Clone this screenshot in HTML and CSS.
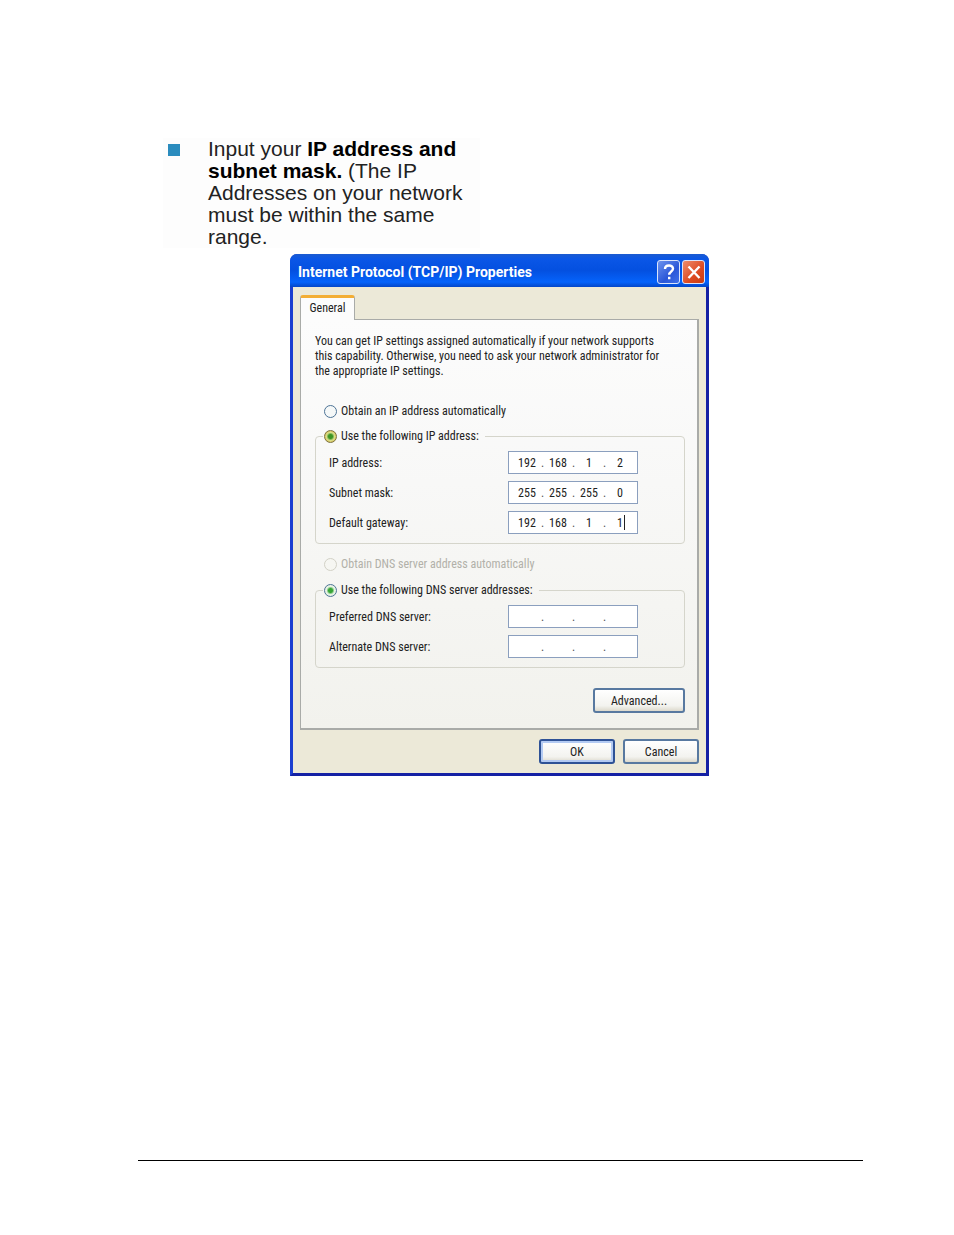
FILE: index.html
```html
<!DOCTYPE html>
<html lang="en">
<head>
    <meta charset="UTF-8">
    <meta name="viewport" content="width=device-width, initial-scale=1.0">
    <title>Internet Protocol (TCP/IP) Properties</title>
    <link rel="stylesheet" href="styles.css">
</head>
<body>
    <main class="page">
        <ul class="steps">
            <li class="step">Input your <strong>IP address and subnet mask.</strong> (The IP Addresses on your network must be within the same range.</li>
        </ul>

        <section class="dialog">
            <header class="title-bar">
                <h1 class="title">Internet Protocol (TCP/IP) Properties</h1>
                <button class="title-button help" type="button" aria-label="Help">
                    <svg viewBox="0 0 20 20" width="20" height="20"><path d="M6 7C6 2.3 14 2.3 14 6.8C14 9.5 10.2 9.5 10.2 12.8M10.2 14.8V17.2" /></svg>
                </button>
                <button class="title-button close" type="button" aria-label="Close">
                    <svg viewBox="0 0 20 20" width="20" height="20"><path d="M4.5 4.5L15.5 16M15.5 4.5L4.5 16" /></svg>
                </button>
            </header>

            <form class="dialog-body">
                <button class="tab" type="button">General</button>

                <div class="panel">
                    <p class="intro">You can get IP settings assigned automatically if your network supports this capability. Otherwise, you need to ask your network administrator for the appropriate IP settings.</p>

                    <label class="option first"><input type="radio" name="ip">Obtain an IP address automatically</label>
                    <fieldset class="group">
                        <legend><label class="option"><input class="hot" type="radio" name="ip" checked>Use the following IP address:</label></legend>
                        <div class="row">
                            <label for="ip-1">IP address:</label>
                            <div class="address">
                                <input id="ip-1" value="192"><span>.</span><input aria-label="IP address, part 2" value="168"><span>.</span><input aria-label="IP address, part 3" value="1"><span>.</span><input aria-label="IP address, part 4" value="2">
                            </div>
                        </div>
                        <div class="row">
                            <label for="mask-1">Subnet mask:</label>
                            <div class="address">
                                <input id="mask-1" value="255"><span>.</span><input aria-label="Subnet mask, part 2" value="255"><span>.</span><input aria-label="Subnet mask, part 3" value="255"><span>.</span><input aria-label="Subnet mask, part 4" value="0">
                            </div>
                        </div>
                        <div class="row">
                            <label for="gateway-1">Default gateway:</label>
                            <div class="address active">
                                <input id="gateway-1" value="192"><span>.</span><input aria-label="Default gateway, part 2" value="168"><span>.</span><input aria-label="Default gateway, part 3" value="1"><span>.</span><input aria-label="Default gateway, part 4" value="1">
                            </div>
                        </div>
                    </fieldset>

                    <label class="option second"><input type="radio" name="dns" disabled>Obtain DNS server address automatically</label>
                    <fieldset class="group">
                        <legend><label class="option"><input type="radio" name="dns" checked>Use the following DNS server addresses:</label></legend>
                        <div class="row">
                            <label for="dns-1">Preferred DNS server:</label>
                            <div class="address">
                                <input id="dns-1"><span>.</span><input aria-label="Preferred DNS server, part 2"><span>.</span><input aria-label="Preferred DNS server, part 3"><span>.</span><input aria-label="Preferred DNS server, part 4">
                            </div>
                        </div>
                        <div class="row">
                            <label for="alt-1">Alternate DNS server:</label>
                            <div class="address">
                                <input id="alt-1"><span>.</span><input aria-label="Alternate DNS server, part 2"><span>.</span><input aria-label="Alternate DNS server, part 3"><span>.</span><input aria-label="Alternate DNS server, part 4">
                            </div>
                        </div>
                    </fieldset>

                    <div class="panel-actions">
                        <button class="button advanced" type="button">Advanced...</button>
                    </div>
                </div>

                <div class="dialog-actions">
                    <button class="button default" type="button">OK</button>
                    <button class="button" type="button">Cancel</button>
                </div>
            </form>
        </section>

        <hr class="footer-rule">
    </main>
</body>
</html>
```
FILE: styles.css
```css
* {
    box-sizing: border-box;
    margin: 0;
    padding: 0;
}

body {
    background: #fff;
    color: #222;
    font-family: "Liberation Sans", Arial, sans-serif;
}

.page {
    display: flex;
    flex-direction: column;
    min-height: 100vh;
    padding: 138px 91px 74px 138px;
}

/* Instruction */
.steps {
    list-style: none;
    width: 100%;
    max-width: 342px;
    padding-left: 25px;
}

.step {
    padding: 0 10px 0 45px;
    font-size: 21px;
    line-height: 22px;
    background: linear-gradient(#2b8cbe, #2b8cbe) 5px 6px / 12px 12px no-repeat #fdfdfd;
}

.step strong {
    color: #000;
}

/* Dialog window */
.dialog {
    width: 100%;
    max-width: 419px;
    margin: 6px 0 24px 152px;
    border: 3px solid #1c3fd0;
    border-right-color: #1420a4;
    border-bottom-color: #1420a4;
    border-radius: 7px 7px 0 0;
    background: #ece9d8;
    font-family: "Roboto Condensed", "Roboto", sans-serif;
    font-size: 12px;
}

.title-bar {
    display: flex;
    align-items: center;
    gap: 2px;
    height: 33px;
    margin: -3px -3px 0;
    padding: 2px 4px 0 8px;
    border-radius: 7px 7px 0 0;
    background: linear-gradient(#1b5bd0, #0a56e6 15%, #0450e0 50%, #0563fb 85%, #0446c8);
}

.title {
    flex: 1;
    color: #fff;
    font-family: "Roboto", sans-serif;
    font-size: 14px;
    font-weight: 700;
}

.title-button {
    display: flex;
    align-items: center;
    justify-content: center;
    width: 23px;
    height: 24px;
    border: 1px solid #dbe5fb;
    border-radius: 3px;
}

.title-button svg {
    fill: none;
    stroke: #fff;
    stroke-width: 2.4;
}

.help {
    background: linear-gradient(135deg, #6d93ee, #2a57d8 60%, #3f70ea);
}

.close {
    background: linear-gradient(135deg, #ee8c6c, #dd4a21 60%, #c83c14);
}

.dialog-body {
    padding: 8px 7px 9px;
}

.tab {
    display: block;
    width: 55px;
    height: 25px;
    margin-bottom: -1px;
    padding-bottom: 3px;
    position: relative;
    border: 1px solid #a9aba8;
    border-top: 3px solid #f3ae35;
    border-bottom: 0;
    border-radius: 3px 3px 0 0;
    background: #fcfcfc;
    color: #222;
    font: inherit;
}

.panel {
    padding: 14px 12px 15px 14px;
    border: 1px solid #a9aba8;
    border-right-width: 2px;
    border-bottom-width: 2px;
    background: linear-gradient(#fcfcfc, #f8f8f7 40%, #f2f2ed);
}

.intro {
    padding-right: 16px;
    line-height: 15px;
}

.option {
    display: flex;
    align-items: center;
    gap: 4px;
    height: 16px;
}

.option input {
    appearance: none;
    width: 13px;
    height: 13px;
    border: 1px solid #4d7396;
    border-radius: 50%;
    background: #f5f8f8;
}

.option input:checked {
    background: radial-gradient(circle, #35a535 0 2px, #e6f2e3 4px);
}

.option input.hot:checked {
    border-color: #7a7440;
    background: radial-gradient(circle, #3d9424 0 2px, #d5e08c 4px, #e5bb50 6px);
}

.option input:disabled {
    border-color: #d2d1c6;
    background: #f6f6f2;
}

.first {
    margin: 24px 0 9px 9px;
}

.second {
    margin: 12px 0 10px 9px;
}

.option:has(:disabled) {
    color: #b2b1a9;
}

.group {
    padding: 0 7px 9px;
    border: 1px solid #d5d5cb;
    border-radius: 4px;
}

.group legend {
    padding: 0 6px 0 1px;
}

.row {
    display: flex;
    align-items: center;
    justify-content: space-between;
    margin-top: 7px;
    padding: 0 39px 0 6px;
}

.address {
    display: flex;
    align-items: center;
    position: relative;
    width: 130px;
    height: 23px;
    padding: 0 1px 0 4px;
    border: 1px solid #8b9fbe;
    background: #fff;
}

.address input {
    width: 28px;
    border: 0;
    outline: 0;
    background: none;
    color: #222;
    font: inherit;
    text-align: center;
}

.address span {
    width: 3px;
    color: #555;
}

/* Text cursor in the field being edited */
.active::after {
    content: "";
    position: absolute;
    top: 3px;
    right: 12px;
    width: 1px;
    height: 15px;
    background: #222;
}

.panel-actions,
.dialog-actions {
    display: flex;
    justify-content: flex-end;
    gap: 8px;
}

.panel-actions {
    margin-top: 20px;
}

.dialog-actions {
    margin-top: 9px;
}

.button {
    width: 76px;
    height: 25px;
    border: 2px solid #5879a0;
    border-radius: 3px;
    background: linear-gradient(#fff, #f3f3ef 75%, #dcd9cc);
    color: #222;
    font: inherit;
}

.advanced {
    width: 92px;
}

.default {
    border-color: #2e5296;
    box-shadow: inset 0 0 0 2px #b4cbf3;
}

.footer-rule {
    margin-top: auto;
    border: 0;
    border-top: 1px solid #000;
}
```
